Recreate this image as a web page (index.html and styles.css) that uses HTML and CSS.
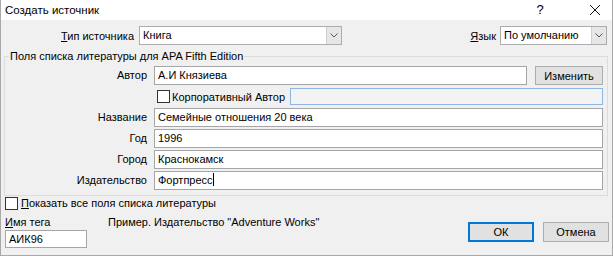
FILE: index.html
```html
<!DOCTYPE html>
<html lang="ru">

<head>
    <meta charset="UTF-8">
    <title>Создать источник</title>
    <link rel="stylesheet" href="styles.css">
</head>

<body>
    <div class="window">
        <div class="titlebar">
            <span class="title">Создать источник</span>
            <span class="help">?</span>
            <span class="close">
                <svg width="12" height="12" viewBox="0 0 12 12"><path d="M1 1 L11 11 M11 1 L1 11" stroke="#111" stroke-width="1" fill="none"/></svg>
            </span>
        </div>

        <div class="content">
            <div class="top-row">
                <label class="type-label"><u>Т</u>ип источника</label>
                <div class="combo type-combo">
                    <span class="combo-text">Книга</span>
                    <span class="combo-btn"><svg width="8" height="5" viewBox="0 0 8 5"><path d="M0.5 0.5 L4 4 L7.5 0.5" stroke="#555" fill="none"/></svg></span>
                </div>
                <label class="lang-label"><u>Я</u>зык</label>
                <div class="combo lang-combo">
                    <span class="combo-text">По умолчанию</span>
                    <span class="combo-btn"><svg width="8" height="5" viewBox="0 0 8 5"><path d="M0.5 0.5 L4 4 L7.5 0.5" stroke="#555" fill="none"/></svg></span>
                </div>
            </div>

            <div class="group">
                <div class="group-title">Поля списка литературы для APA Fifth Edition</div>
                <div class="fields">
                    <label class="field-label">Автор</label>
                    <div class="author-row">
                        <div class="textbox author-box">А.И Князиева</div>
                        <button class="btn edit-btn">Изменить</button>
                    </div>

                    <span></span>
                    <div class="corp-row">
                        <span class="checkbox"></span>
                        <span class="corp-text">Корпоративный Автор</span>
                        <div class="textbox disabled-box"></div>
                    </div>

                    <label class="field-label">Название</label>
                    <div class="textbox">Семейные отношения 20 века</div>

                    <label class="field-label">Год</label>
                    <div class="textbox">1996</div>

                    <label class="field-label">Город</label>
                    <div class="textbox">Краснокамск</div>

                    <label class="field-label">Издательство</label>
                    <div class="textbox">Фортпресс<span class="caret"></span></div>
                </div>
            </div>

            <div class="show-all">
                <span class="checkbox"></span>
                <span><u>П</u>оказать все поля списка литературы</span>
            </div>

            <div class="bottom">
                <div class="tag">
                    <div class="tag-label"><u>И</u>мя тега</div>
                    <div class="textbox tag-box">АИК96</div>
                </div>
                <div class="example">Пример. Издательство "Adventure Works"</div>
                <div class="buttons">
                    <button class="btn ok-btn">ОК</button>
                    <button class="btn">Отмена</button>
                </div>
            </div>
        </div>
    </div>
</body>

</html>
```

FILE: styles.css
```css
* {
    box-sizing: border-box;
}

body {
    margin: 0;
    font-family: "Liberation Sans", Arial, sans-serif;
    font-size: 11px;
    line-height: 14px;
    color: #000;
    background: #f0f0f0;
}

.window {
    width: 613px;
    height: 256px;
    background: #f0f0f0;
    border: 1px solid #a8a8a8;
    border-top: none;
    overflow: hidden;
}

.titlebar {
    height: 20px;
    background: #fff;
    display: flex;
    align-items: center;
    padding-left: 4px;
    font-size: 11.5px;
}

.title {
    flex: 1;
}

.help {
    width: 12px;
    text-align: center;
    margin-right: 43px;
    font-size: 13px;
}

.close {
    display: flex;
    margin-right: 11px;
}

.content {
    padding: 6px 3px 0 3px;
}

.top-row {
    display: flex;
    align-items: center;
    height: 19px;
}

.type-label {
    width: 130px;
    text-align: right;
}

.combo {
    display: flex;
    height: 19px;
    background: #fff;
    border: 1px solid #adadad;
}

.type-combo {
    width: 203px;
    margin-left: 5px;
}

.lang-label {
    margin-left: auto;
    margin-right: 4px;
}

.lang-combo {
    width: 107px;
    margin-right: 2px;
}

.combo-text {
    flex: 1;
    padding-left: 3px;
    line-height: 17px;
}

.combo-btn {
    width: 15px;
    background: #e6e6e6;
    border-left: 1px solid #cfcfcf;
    display: flex;
    align-items: center;
    justify-content: center;
}

.group {
    margin-top: 11px;
    border: 1px solid #dcdcdc;
    margin-right: 1px;
    padding: 0 4px 5px 0;
}

.group-title {
    width: fit-content;
    margin: -8px 0 0 4px;
    padding: 0 1px;
    background: #f0f0f0;
    line-height: 14px;
}

.fields {
    display: grid;
    grid-template-columns: 142px 1fr;
    column-gap: 7px;
    row-gap: 2px;
    margin-top: 3px;
}

.field-label {
    text-align: right;
    line-height: 19px;
}

.textbox {
    height: 19px;
    background: #fff;
    border: 1px solid #a6a6a6;
    padding-left: 3px;
    line-height: 17px;
    white-space: nowrap;
}

.caret {
    display: inline-block;
    width: 1px;
    height: 13px;
    background: #000;
    vertical-align: -2px;
}

.author-row {
    display: flex;
}

.author-box {
    flex: 1;
}

.btn {
    font: inherit;
    color: #000;
    background: #e1e1e1;
    border: 1px solid #adadad;
    height: 19px;
    padding: 0;
}

.edit-btn {
    width: 68px;
    margin-left: 8px;
}

.corp-row {
    display: flex;
    align-items: center;
    height: 19px;
}

.checkbox {
    width: 13px;
    height: 13px;
    background: #fff;
    border: 1px solid #333;
    display: inline-block;
    flex: none;
}

.corp-row .checkbox {
    margin-left: 3px;
}

.corp-text {
    margin-left: 2px;
    width: 118px;
    white-space: nowrap;
}

.disabled-box {
    flex: 1;
    height: 17px;
    background: #f3f3f3;
    border-color: #8db6e3;
}

.show-all {
    display: flex;
    align-items: center;
    margin-top: 0;
    height: 14px;
}

.show-all .checkbox {
    margin-left: 1px;
    margin-right: 3px;
}

.bottom {
    display: flex;
    margin-top: 5px;
}

.tag {
    width: 82px;
    margin-left: 1px;
}

.tag-label {
    line-height: 14px;
}

.tag-box {
    margin-top: 1px;
    height: 18px;
}

.example {
    margin-left: 21px;
    line-height: 14px;
}

.buttons {
    margin-left: auto;
    margin-top: 7px;
    display: flex;
    gap: 9px;
    margin-right: 0;
}

.buttons .btn {
    width: 66px;
    height: 20px;
}

.ok-btn {
    border: 1px solid #0078d7;
    box-shadow: inset 0 0 0 1px #0078d7;
}
```
